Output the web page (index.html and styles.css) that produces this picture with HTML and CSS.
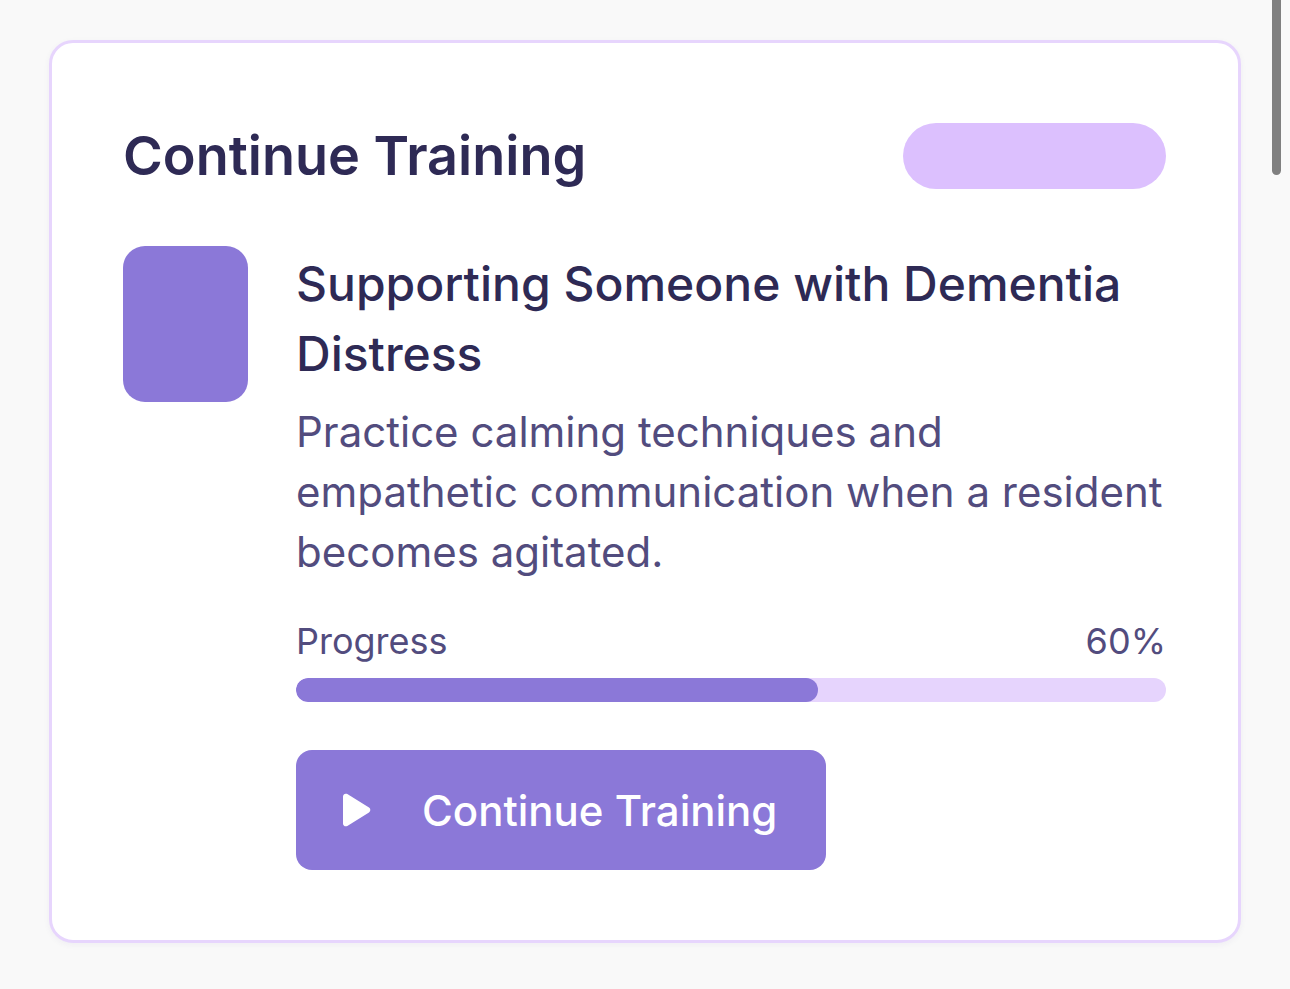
FILE: index.html
```html
<!DOCTYPE html>
<html lang="en">
<head>
<meta charset="utf-8">
<title>Continue Training</title>
<link rel="stylesheet" href="styles.css">
</head>
<body>
<section class="card">
  <header class="card-header">
    <h2 class="card-title">Continue Training</h2>
    <span class="pill"></span>
  </header>
  <div class="course">
    <div class="course-icon"></div>
    <div class="course-body">
      <h3 class="course-title">Supporting Someone with Dementia Distress</h3>
      <p class="course-desc">Practice calming techniques and empathetic communication when a resident becomes agitated.</p>
      <div class="progress">
        <div class="progress-labels">
          <span>Progress</span>
          <span>60%</span>
        </div>
        <div class="progress-track"><div class="progress-fill" style="width:60%"></div></div>
      </div>
      <button class="btn" type="button">
        <svg class="btn-icon" viewBox="0 0 32 36" width="32" height="36" aria-hidden="true">
          <path d="M3 4.5C3 2.2 5.4 0.9 7.3 2.1L29 15.6C30.8 16.7 30.8 19.3 29 20.4L7.3 33.9C5.4 35.1 3 33.8 3 31.5Z" fill="#fff"/>
        </svg>
        <span class="btn-label">Continue Training</span>
      </button>
    </div>
  </div>
</section>
<div class="scroll-thumb"></div>
</body>
</html>
```
FILE: styles.css
```css
* { box-sizing: border-box; }
html, body { margin: 0; }
body {
  background: #f9f9f9;
  font-family: Inter, "Noto Sans", sans-serif;
  padding: 40px 49px;
  min-height: 989px;
}
.card {
  background: #fff;
  border: 3px solid #e7d5fd;
  border-radius: 24px;
  padding: 80px 72px 70px 71px;
  box-shadow: 0 2px 6px rgba(60, 40, 120, 0.05);
}
.card-header {
  display: flex;
  align-items: center;
  justify-content: space-between;
  height: 66px;
}
.card-title {
  margin: 0;
  font-size: 54px;
  font-weight: 600;
  color: #2e2a55;
  line-height: 66px;
}
.pill {
  width: 263px;
  height: 66px;
  border-radius: 33px;
  background: #dcc0fe;
}
.course {
  display: flex;
  gap: 48px;
  margin-top: 57px;
}
.course-icon {
  flex: none;
  width: 125px;
  height: 156px;
  border-radius: 22px;
  background: #8b78d8;
}
.course-body {
  flex: 1;
  min-width: 0;
}
.course-title {
  margin: 0;
  padding-top: 3px;
  font-size: 48px;
  font-weight: 500;
  line-height: 70px;
  color: #2e2a55;
}
.course-desc {
  margin: 13px 0 0;
  font-size: 42px;
  line-height: 60px;
  color: #524c7e;
}
.progress { margin-top: 37px; }
.progress-labels {
  display: flex;
  justify-content: space-between;
  font-size: 36px;
  line-height: 44px;
  color: #524c7e;
}
.progress-track {
  margin-top: 15px;
  height: 24px;
  border-radius: 12px;
  background: #e6d4fd;
  overflow: hidden;
}
.progress-fill {
  height: 100%;
  border-radius: 12px;
  background: #8b78d8;
}
.btn {
  margin-top: 48px;
  display: flex;
  align-items: center;
  gap: 50px;
  height: 120px;
  width: 530px;
  padding: 0 44px;
  border: 0;
  border-radius: 16px;
  background: #8b78d8;
  color: #fff;
  font-family: inherit;
  font-size: 42px;
  font-weight: 500;
  white-space: nowrap;
}
.btn-icon { flex: none; }
.scroll-thumb {
  position: fixed;
  top: 0;
  right: 9px;
  width: 9px;
  height: 175px;
  border-radius: 0 0 5px 5px;
  background: #808080;
}
```
